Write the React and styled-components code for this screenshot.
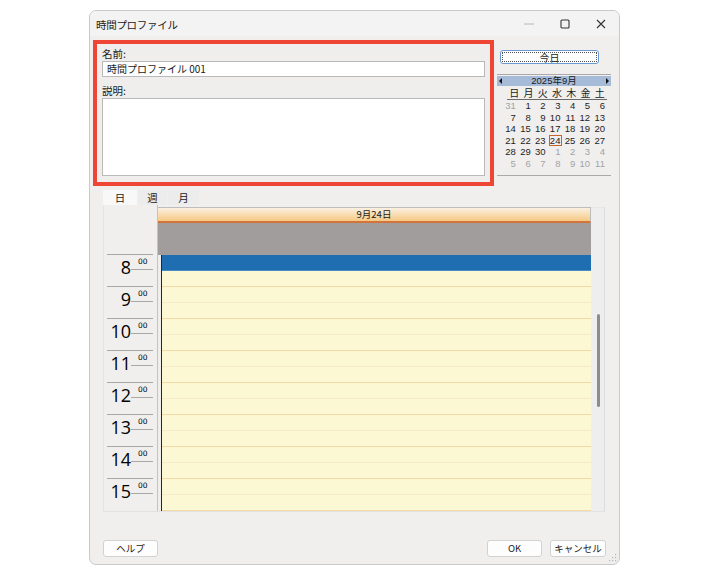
import React from "react";
import styled, { createGlobalStyle } from "styled-components";

const GlobalStyle = createGlobalStyle`
  html, body {
    margin: 0;
    padding: 0;
    background: #ffffff;
  }
  body {
    font-family: "Noto Sans CJK JP", "Noto Sans", sans-serif;
    color: #1a1a1a;
  }
`;

const Window = styled.div`
  position: relative;
  margin: 10px 0 0 89px;
  width: 531px;
  height: 555px;
  box-sizing: border-box;
  border: 1px solid #c9c9c9;
  border-radius: 7px;
  background: #f0efee;
  overflow: hidden;
  display: flex;
  flex-direction: column;
`;

const TitleBar = styled.div`
  height: 25px;
  display: flex;
  align-items: center;
  padding-left: 6px;
  background: #f3f3f3;
  font-size: 10.5px;
  letter-spacing: -0.3px;
`;

const Title = styled.span`
  flex: 1;
  padding-top: 1px;
`;

const Ctrl = styled.span`
  width: 36px;
  display: flex;
  justify-content: center;
  align-items: center;
  color: ${(p) => (p.$faded ? "#b8b8b8" : "#333")};
`;

const Body = styled.div`
  flex: 1;
  display: flex;
  flex-direction: column;
  padding: 4px 4px 0 3px;
`;

const TopRow = styled.div`
  display: flex;
  gap: 3px;
`;

const Highlight = styled.div`
  width: 401px;
  height: 146px;
  box-sizing: border-box;
  border: 4px solid #ef4535;
  padding: 0 5px 0 5px;
  display: flex;
  flex-direction: column;
  background: #efeeec;
`;

const Label = styled.div`
  font-size: 10.5px;
  line-height: 14px;
  margin-top: ${(p) => p.$top}px;
  margin-bottom: ${(p) => p.$bottom}px;
`;

const TextInput = styled.div`
  height: 16px;
  box-sizing: border-box;
  border: 1px solid #b9b9b9;
  background: #fff;
  font-size: 10px;
  line-height: 14px;
  padding-left: 4px;
`;

const TextArea = styled.div`
  height: 78px;
  box-sizing: border-box;
  border: 1px solid #b9b9b9;
  background: #fff;
`;

const Side = styled.div`
  width: 116px;
  display: flex;
  flex-direction: column;
`;

const TodayButton = styled.div`
  margin: 10px 0 0 3px;
  width: 99px;
  height: 14px;
  box-sizing: border-box;
  border: 1px solid #6a98d3;
  border-radius: 3px;
  background: #fff;
  padding: 1px;
  display: flex;
`;

const TodayInner = styled.div`
  flex: 1;
  border: 1px dotted #555;
  font-size: 10px;
  line-height: 9px;
  text-align: center;
`;

const Calendar = styled.div`
  margin-top: 10px;
  width: 114px;
  border-top: 1px solid #a9a9a9;
  border-bottom: 1px solid #a9a9a9;
  padding: 1px 0 5px;
`;

const CalHeader = styled.div`
  height: 10px;
  background: #a5bbd8;
  display: flex;
  align-items: center;
  justify-content: space-between;
  padding: 0 2px;
  font-family: "Liberation Sans", "Noto Sans CJK JP", sans-serif;
  font-size: 9.5px;
  line-height: 10px;
`;

const Arrow = styled.span`
  width: 0;
  height: 0;
  border-top: 3px solid transparent;
  border-bottom: 3px solid transparent;
  ${(p) => (p.$dir === "left" ? "border-right: 3px solid #111;" : "border-left: 3px solid #111;")}
`;

const DayNames = styled.div`
  margin: 3px 4px 0 10px;
  height: 10px;
  display: grid;
  grid-template-columns: repeat(7, 1fr);
  border-bottom: 1px solid #6b6b6b;
  font-family: "Liberation Sans", "Noto Sans CJK JP", sans-serif;
  font-size: 10px;
  line-height: 10px;
  text-align: center;
`;

const CalGrid = styled.div`
  margin: 0 4px 0 6px;
  display: grid;
  grid-template-columns: repeat(7, 1fr);
  grid-auto-rows: 11.6px;
  font-family: "Liberation Sans", sans-serif;
  font-size: 9.5px;
  line-height: 11.6px;
`;

const DateCell = styled.div`
  text-align: right;
  padding-right: 2px;
  color: ${(p) => (p.$other ? "#a3a3a3" : "#1e1e1e")};
  ${(p) => (p.$today ? "outline: 1px solid #c4642f; outline-offset: -1px; margin-left: 1px;" : "")}
`;

const Tabs = styled.div`
  margin: 4px 0 0 10px;
  display: flex;
  height: 15px;
`;

const Tab = styled.div`
  width: ${(p) => p.$w}px;
  box-sizing: border-box;
  text-align: center;
  font-size: 10.5px;
  line-height: 15px;
  background: ${(p) => (p.$active ? "#f8f8f8" : "#ececec")};
  margin-right: 1px;
`;

const Frame = styled.div`
  margin-left: 10px;
  width: 502px;
  height: 307px;
  display: flex;
  border-left: 1px solid #e4e4e4;
  border-bottom: 1px solid #e2e2e2;
  box-sizing: border-box;
`;

const TimeCol = styled.div`
  width: 54px;
  border-right: 1px solid #c3c3c3;
  padding-top: 49px;
  box-sizing: border-box;
  overflow: hidden;
`;

const HourBlock = styled.div`
  margin: 0 4px 0 3px;
  height: 32px;
  box-sizing: border-box;
  border-top: 1px solid #a8a8a8;
  display: flex;
`;

const HourNum = styled.div`
  width: 24px;
  text-align: right;
  font-family: "Open Sans", "Noto Sans", sans-serif;
  font-size: 18px;
  line-height: 20px;
  padding-top: 2px;
  color: #000;
`;

const MinCol = styled.div`
  width: 22px;
  height: 15px;
  border-bottom: 1px solid #a8a8a8;
  font-family: "DejaVu Sans", sans-serif;
  font-size: 7.5px;
  line-height: 7px;
  padding-left: 7px;
  padding-top: 3px;
  box-sizing: border-box;
  color: #000;
`;

const DayCol = styled.div`
  width: 433px;
  display: flex;
  flex-direction: column;
  padding-top: 2px;
`;

const DayHeader = styled.div`
  height: 16px;
  box-sizing: border-box;
  border-top: 1px solid #bdbdbd;
  border-right: 1px solid #bdbdbd;
  border-bottom: 2px solid #d4743d;
  background: linear-gradient(#fbf0e2, #f5c983);
  font-size: 9.5px;
  line-height: 12px;
  text-align: center;
`;

const AllDay = styled.div`
  height: 32px;
  background: #a19d9c;
`;

const Slots = styled.div`
  margin-left: 3px;
  border-left: 1.5px solid #262626;
  flex: 1;
  overflow: hidden;
`;

const Slot = styled.div`
  height: 16px;
  box-sizing: border-box;
  background: ${(p) => (p.$busy ? "#1f6eb1" : "#fcf8d4")};
  border-bottom: 1px solid ${(p) => (p.$busy ? "#4a8bc4" : p.$hour ? "#f3d9a6" : "#f5ebc9")};
`;

const Track = styled.div`
  width: 14px;
  background: #eeeeee;
  border-right: 1px solid #dcdcdc;
  border-top: 1px solid #e6e6e6;
  margin-top: 2px;
  padding: 106px 0 0 6px;
  box-sizing: border-box;
`;

const Thumb = styled.div`
  width: 2.5px;
  height: 93px;
  border-radius: 2px;
  background: #8c8c8c;
`;

const Footer = styled.div`
  display: flex;
  align-items: center;
  padding: 28px 9px 0 10px;
`;

const Button = styled.div`
  width: ${(p) => p.$w}px;
  height: 17px;
  box-sizing: border-box;
  border: 1px solid #d2d2d2;
  border-radius: 3px;
  background: #fdfdfd;
  font-size: 9.5px;
  line-height: 15px;
  text-align: center;
  margin-left: ${(p) => p.$ml || 0}px;
`;

const Spacer = styled.div`
  flex: 1;
`;

const Grip = styled.svg`
  position: absolute;
  right: 2px;
  bottom: 2px;
`;

const prev = [31];
const days = Array.from({ length: 30 }, (_, i) => i + 1);
const next = Array.from({ length: 11 }, (_, i) => i + 1);
const hours = [8, 9, 10, 11, 12, 13, 14, 15];

export default function App() {
  return (
    <>
      <GlobalStyle />
      <Window>
        <TitleBar>
          <Title>時間プロファイル</Title>
          <Ctrl $faded>
            <svg width="10" height="10" viewBox="0 0 10 10">
              <line x1="0" y1="5" x2="10" y2="5" stroke="currentColor" strokeWidth="1" />
            </svg>
          </Ctrl>
          <Ctrl>
            <svg width="10" height="10" viewBox="0 0 10 10">
              <rect x="1" y="1" width="8" height="8" rx="1" fill="none" stroke="currentColor" strokeWidth="1.1" />
            </svg>
          </Ctrl>
          <Ctrl>
            <svg width="10" height="10" viewBox="0 0 10 10">
              <path d="M1 1 L9 9 M9 1 L1 9" stroke="currentColor" strokeWidth="1.1" />
            </svg>
          </Ctrl>
        </TitleBar>
        <Body>
          <TopRow>
            <Highlight>
              <Label $top={3} $bottom={0}>名前:</Label>
              <TextInput>時間プロファイル 001</TextInput>
              <Label $top={7} $bottom={0}>説明:</Label>
              <TextArea />
            </Highlight>
            <Side>
              <TodayButton>
                <TodayInner>今日</TodayInner>
              </TodayButton>
              <Calendar>
                <CalHeader>
                  <Arrow $dir="left" />
                  <span>2025年9月</span>
                  <Arrow $dir="right" />
                </CalHeader>
                <DayNames>
                  {["日", "月", "火", "水", "木", "金", "土"].map((d) => (
                    <span key={d}>{d}</span>
                  ))}
                </DayNames>
                <CalGrid>
                  {prev.map((d) => (
                    <DateCell key={"p" + d} $other>{d}</DateCell>
                  ))}
                  {days.map((d) => (
                    <DateCell key={d} $today={d === 24}>{d}</DateCell>
                  ))}
                  {next.map((d) => (
                    <DateCell key={"n" + d} $other>{d}</DateCell>
                  ))}
                </CalGrid>
              </Calendar>
            </Side>
          </TopRow>
          <Tabs>
            <Tab $w={34} $active>日</Tab>
            <Tab $w={29}>週</Tab>
            <Tab $w={31}>月</Tab>
          </Tabs>
          <Frame>
            <TimeCol>
              {hours.map((h) => (
                <HourBlock key={h}>
                  <HourNum>{h}</HourNum>
                  <MinCol>00</MinCol>
                </HourBlock>
              ))}
            </TimeCol>
            <DayCol>
              <DayHeader>9月24日</DayHeader>
              <AllDay />
              <Slots>
                {Array.from({ length: 16 }, (_, i) => (
                  <Slot key={i} $busy={i === 0} $hour={i % 2 === 1} />
                ))}
              </Slots>
            </DayCol>
            <Track>
              <Thumb />
            </Track>
          </Frame>
          <Footer>
            <Button $w={55}>ヘルプ</Button>
            <Spacer />
            <Button $w={55}>OK</Button>
            <Button $w={56} $ml={8}>キャンセル</Button>
          </Footer>
        </Body>
        <Grip width="8" height="8" viewBox="0 0 8 8">
          <g fill="#b5b5b5">
            <rect x="6" y="0" width="1.2" height="1.2" />
            <rect x="3" y="3" width="1.2" height="1.2" />
            <rect x="6" y="3" width="1.2" height="1.2" />
            <rect x="0" y="6" width="1.2" height="1.2" />
            <rect x="3" y="6" width="1.2" height="1.2" />
            <rect x="6" y="6" width="1.2" height="1.2" />
          </g>
        </Grip>
      </Window>
    </>
  );
}
